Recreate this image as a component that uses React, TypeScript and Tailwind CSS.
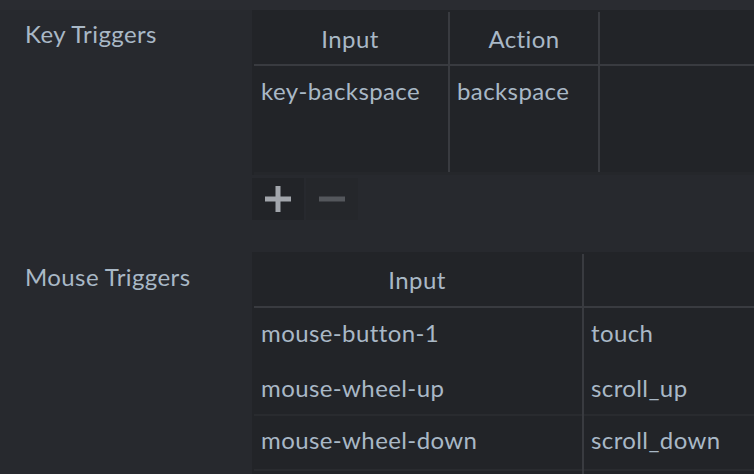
import React from 'react'

const font = { fontFamily: 'Lato, "Noto Sans", sans-serif' }

function Divider() {
  return <div className="w-[2px] self-stretch bg-[#393b40]" />
}

function KeyTriggers() {
  return (
    <div className="flex">
      <div className="w-[252px] shrink-0 pl-[25px] pt-[11px] leading-[26px]">Key Triggers</div>
      <div className="flex-1">
        <div className="bg-[#222428]">
          <div className="flex h-[54px] items-center">
            <div className="w-[196px] pt-[3px] text-center">Input</div>
            <div className="self-stretch pt-[2px]"><div className="h-full w-[2px] bg-[#393b40]" /></div>
            <div className="w-[148px] pt-[3px] text-center">Action</div>
            <div className="self-stretch pt-[2px]"><div className="h-full w-[2px] bg-[#393b40]" /></div>
            <div className="flex-1" />
          </div>
          <div className="ml-[2px] h-[2px] bg-[#393b40]" />
          <div className="flex h-[106px] leading-[26px]">
            <div className="w-[196px] pl-[9px] pt-[12px]">key-backspace</div>
            <Divider />
            <div className="w-[148px] pl-[7px] pt-[12px]">backspace</div>
            <Divider />
            <div className="flex-1" />
          </div>
          <div className="ml-[2px] h-[3px] bg-[#25272b]" />
        </div>
        <div className="mt-[3px] flex gap-[2px]">
          <div className="flex h-[42px] w-[52px] items-center justify-center bg-[#222428]">
            <svg width="26" height="26" viewBox="0 0 26 26">
              <rect x="0" y="10.5" width="26" height="5" fill="#a2a6ac" />
              <rect x="10.5" y="0" width="5" height="26" fill="#a2a6ac" />
            </svg>
          </div>
          <div className="flex h-[42px] w-[52px] items-center justify-center bg-[#25272b]">
            <svg width="26" height="26" viewBox="0 0 26 26">
              <rect x="0" y="10.5" width="26" height="5" fill="#54575c" />
            </svg>
          </div>
        </div>
      </div>
    </div>
  )
}

const mouseRows = [
  { input: 'mouse-button-1', action: 'touch', pt: 'pt-[12px]', line: false },
  { input: 'mouse-wheel-up', action: 'scroll_up', pt: 'pt-[14px]', line: true },
  { input: 'mouse-wheel-down', action: 'scroll_down', pt: 'pt-[11px]', line: true },
  { input: '', action: '', pt: 'pt-[11px]', line: false },
]

function RowLine() {
  return (
    <div className="flex h-[2px]">
      <div className="ml-[2px] w-[328px] bg-[#292b2f]" />
      <div className="w-[2px] bg-[#393b40]" />
      <div className="flex-1 bg-[#292b2f]" />
    </div>
  )
}

function MouseTriggers() {
  return (
    <div className="mt-[32px] flex">
      <div className="w-[252px] shrink-0 pl-[25px] pt-[12px] leading-[26px]">Mouse Triggers</div>
      <div className="flex-1 bg-[#222428]">
        <div className="flex h-[54px] items-center">
          <div className="w-[330px] pt-[2px] text-center">Input</div>
          <div className="self-stretch pt-[2px]"><div className="h-full w-[2px] bg-[#393b40]" /></div>
          <div className="flex-1" />
        </div>
        <div className="ml-[2px] h-[2px] bg-[#393b40]" />
        {mouseRows.map((r, i) => (
          <div key={i}>
            <div className="flex h-[53px] leading-[26px]">
              <div className={`w-[330px] pl-[9px] ${r.pt}`}>{r.input}</div>
              <Divider />
              <div className={`flex-1 pl-[7px] ${r.pt}`}>{r.action}</div>
            </div>
            {r.line && <RowLine />}
          </div>
        ))}
      </div>
    </div>
  )
}

export default function App() {
  return (
    <div
      className="h-[474px] w-[754px] overflow-hidden bg-[#27292e] text-[24px] tracking-[0.4px] text-[#a9b8c6]"
      style={font}
    >
      <div className="h-[10px] bg-[#2a2c31]" />
      <KeyTriggers />
      <MouseTriggers />
    </div>
  )
}
